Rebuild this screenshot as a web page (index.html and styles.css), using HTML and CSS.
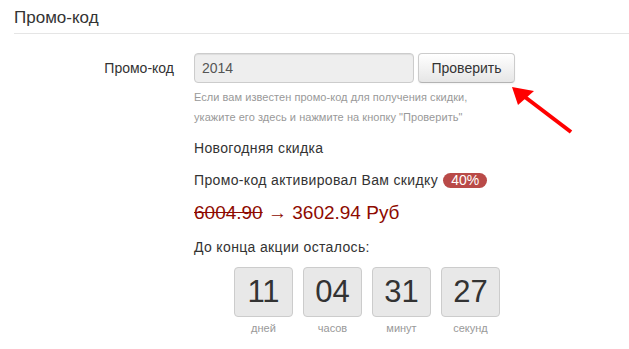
FILE: index.html
```html
<!DOCTYPE html>
<html lang="ru">
<head>
    <meta charset="UTF-8">
    <title>Промо-код</title>
    <link rel="stylesheet" href="styles.css">
</head>
<body>
    <div class="promo-page">
        <h2 class="legend">Промо-код</h2>

        <form class="promo-form">
            <div class="form-row">
                <label class="form-label" for="promoCode">Промо-код</label>
                <div class="controls">
                    <div class="input-group">
                        <input type="text" id="promoCode" class="promo-input" value="2014">
                        <button type="button" class="btn-check">Проверить</button>
                    </div>
                    <p class="help">Если вам известен промо-код для получения скидки,<br>укажите его здесь и нажмите на кнопку "Проверить"</p>

                    <div class="promo-name">Новогодняя скидка</div>
                    <div class="promo-discount">Промо-код активировал Вам скидку <span class="badge">40%</span></div>
                    <div class="price"><s>6004.90</s> &rarr; 3602.94 Руб</div>

                    <div class="timer-title">До конца акции осталось:</div>
                    <div class="countdown">
                        <div class="count-item">
                            <div class="count-box">11</div>
                            <div class="count-label">дней</div>
                        </div>
                        <div class="count-item">
                            <div class="count-box">04</div>
                            <div class="count-label">часов</div>
                        </div>
                        <div class="count-item">
                            <div class="count-box">31</div>
                            <div class="count-label">минут</div>
                        </div>
                        <div class="count-item">
                            <div class="count-box">27</div>
                            <div class="count-label">секунд</div>
                        </div>
                    </div>
                </div>
            </div>
        </form>

        <svg class="pointer" width="80" height="60" viewBox="0 0 80 60">
            <line x1="66" y1="52" x2="16" y2="14" stroke="#ff0000" stroke-width="4"/>
            <polygon points="7,7 29,11 13,25" fill="#ff0000"/>
        </svg>
    </div>
</body>
</html>
```

FILE: styles.css
```css
* {
    margin: 0;
    padding: 0;
    box-sizing: border-box;
}

body {
    font-family: 'Liberation Sans', Arial, sans-serif;
    font-size: 14px;
    line-height: 20px;
    color: #333;
    background: #fff;
}

.promo-page {
    position: relative;
    padding: 0 0 0 14px;
}

.legend {
    font-size: 17px;
    font-weight: normal;
    line-height: 20px;
    padding: 8px 0 5px;
    border-bottom: 1px solid #e5e5e5;
}

.form-row {
    display: flex;
    margin-top: 19px;
}

.form-label {
    width: 160px;
    padding-top: 5px;
    text-align: right;
    margin-right: 20px;
}

.input-group {
    display: flex;
    gap: 4px;
}

.promo-input {
    width: 220px;
    height: 30px;
    padding: 4px 7px;
    font-family: inherit;
    font-size: 14px;
    color: #555;
    background: #eee;
    border: 1px solid #ccc;
    border-radius: 4px;
    box-shadow: inset 0 1px 1px rgba(0, 0, 0, 0.075);
}

.btn-check {
    width: 97px;
    height: 30px;
    font-family: inherit;
    font-size: 14px;
    color: #333;
    background: linear-gradient(#fff, #e6e6e6);
    border: 1px solid #ccc;
    border-bottom-color: #b3b3b3;
    border-radius: 4px;
    box-shadow: inset 0 1px 0 rgba(255, 255, 255, 0.2), 0 1px 2px rgba(0, 0, 0, 0.05);
    cursor: pointer;
}

.help {
    margin-top: 4px;
    font-size: 11px;
    letter-spacing: 0.05px;
    color: #999;
}

.promo-name,
.promo-discount,
.timer-title {
    letter-spacing: 0.35px;
}

.promo-name {
    margin-top: 11px;
}

.promo-discount {
    margin-top: 12px;
}

.badge {
    display: inline-block;
    margin-left: 1px;
    padding: 0 8px;
    font-size: 14px;
    line-height: 15px;
    letter-spacing: 0;
    color: #fff;
    background: #b94a48;
    border-radius: 8px;
}

.price {
    margin-top: 11px;
    font-size: 19px;
    line-height: 24px;
    color: #8e0a00;
}

.timer-title {
    margin-top: 12px;
}

.countdown {
    display: flex;
    gap: 10px;
    margin: 10px 0 0 40px;
}

.count-item {
    width: 59px;
    text-align: center;
}

.count-box {
    height: 50px;
    font-size: 31px;
    line-height: 48px;
    color: #333;
    background: #e8e8e8;
    border: 1px solid #ccc;
    border-radius: 4px;
}

.count-label {
    margin-top: 3px;
    font-size: 11px;
    line-height: 16px;
    color: #999;
}

.pointer {
    position: absolute;
    left: 505px;
    top: 80px;
}
```
